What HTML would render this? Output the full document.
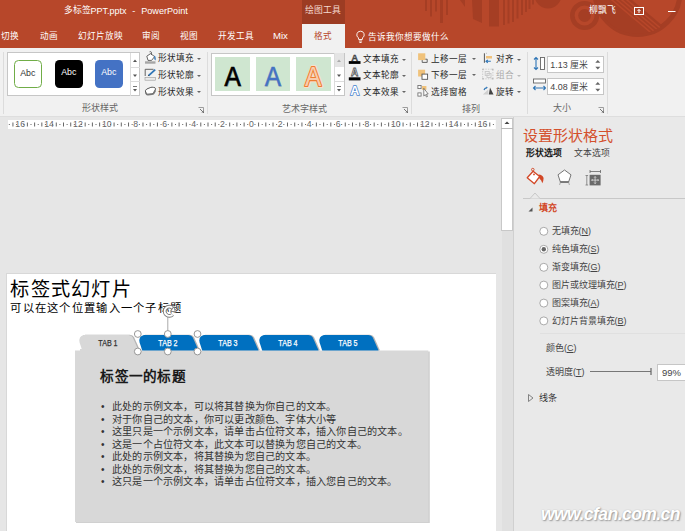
<!DOCTYPE html>
<html lang="zh-CN"><head><meta charset="utf-8">
<style>
*{margin:0;padding:0;box-sizing:border-box}
html,body{width:685px;height:531px;overflow:hidden;background:#e6e6e6;font-family:"Liberation Sans",sans-serif;color:#444}
.a{position:absolute;white-space:nowrap}
.t{position:absolute;white-space:nowrap;line-height:1}
#tb{position:absolute;left:0;top:0;width:685px;height:48px;background:#b7472a;overflow:hidden}
.tab{position:absolute;top:31px;font-size:8.6px;color:#fff;line-height:10px}
#rib{position:absolute;left:0;top:48px;width:685px;height:69px;background:#f1f1f1;border-bottom:1px solid #dedede}
.sep{position:absolute;top:6px;width:1px;height:60px;background:#dcdcdc}
.glab{position:absolute;top:56px;font-size:9px;color:#666;line-height:10px}
.cmd{position:absolute;font-size:8.6px;color:#262626;line-height:10px;font-weight:500}
.dd{display:inline-block;width:0;height:0;border-left:2px solid transparent;border-right:2px solid transparent;border-top:2px solid #666;vertical-align:middle;margin-left:3px}
.launch{position:absolute;width:6px;height:6px}
#main{position:absolute;left:0;top:117px;width:513px;height:414px;background:#e6e6e6}
#pane{position:absolute;left:513px;top:117px;width:172px;height:414px;background:#e9e9e9;border-left:1px solid #d0d0d0}
#slide{position:absolute;left:6px;top:273px;width:490px;height:258px;background:#fff;border-left:1px solid #d8d8d8;border-top:1px solid #d8d8d8}
.ro{position:absolute;font-size:9px;color:#444;line-height:10px}
.rd{position:absolute;width:9px;height:9px;border:1px solid #8a8a8a;border-radius:50%;background:#fff}
.bl{position:absolute;left:101px;font-size:10.1px;color:#333;line-height:12px;white-space:nowrap;letter-spacing:0.2px}
.bl b{position:absolute;left:0;font-weight:normal}
.bl span{position:absolute;left:11px}
.abc{width:27.5px;height:27.5px;border-radius:4.5px;font-size:8.8px;line-height:25px;text-align:center;font-weight:500}
.wa{width:35px;height:34px;background:#cfe6d0;text-align:center;font-size:29px;line-height:34px}
.inp{width:57px;height:16.5px;background:#fff;border:1px solid #c6c6c6;font-size:8.9px;color:#444;line-height:16.5px;padding-left:2.3px}
.sep{top:52px;height:62px}
</style></head><body>

<div id="tb">
  <svg class="a" style="left:0;top:0" width="685" height="47">
  <g fill="#a53e24">
    <rect x="425" y="0" width="2" height="11"/><rect x="430" y="0" width="2" height="16.5"/><rect x="435" y="0" width="2" height="11.5"/>
    <rect x="440" y="0" width="3" height="23"/><rect x="446" y="0" width="2" height="15"/>
    <path d="M460 0 L465 0 L465 7 Z"/>
    <path d="M472 0 L482 0 L482 23 L473 19 Z"/>
    <rect x="489" y="0" width="10" height="26.5"/>
    <rect x="503" y="0" width="2" height="25"/><rect x="507.5" y="0" width="2" height="23.5"/><rect x="512" y="0" width="2" height="22"/>
    <rect x="516.5" y="0" width="2" height="18.5"/><rect x="521" y="0" width="2" height="15"/><rect x="525" y="0" width="2" height="12"/>
    <rect x="528.5" y="0" width="2" height="9"/><rect x="532" y="0" width="2" height="4.5"/>
    <circle cx="548" cy="-5" r="13.5"/>
    <circle cx="584.6" cy="15.5" r="6.4"/>
  </g>
  <circle cx="584.6" cy="15.5" r="12.3" fill="none" stroke="#a53e24" stroke-width="4.6"/>
  <circle cx="637.5" cy="-8" r="42.5" fill="none" stroke="#a53e24" stroke-width="5"/>
  <clipPath id="bc"><circle cx="637.5" cy="-8" r="42"/></clipPath>
  <g clip-path="url(#bc)">
    <path d="M580 -10 L620.1 -10 L680 40.3 L580 40.3 Z" fill="#a53e24"/>
    <g stroke="#b7472a" stroke-width="1.5">
      <path d="M600.1 -10 L660 40.3"/><path d="M605.1 -10 L665 40.3"/><path d="M610.1 -10 L670 40.3"/><path d="M615.1 -10 L675 40.3"/>
    </g>
  </g>
  <g stroke="#fff" fill="none" stroke-width="1">
    <rect x="634.5" y="7.5" width="9" height="7"/>
    <path d="M639 13 V9.5 M637.5 11 L639 9.5 L640.5 11"/>
    <path d="M668 11.5 H675.5"/>
  </g>
  </svg>
  <div class="t" style="left:588.5px;top:5.5px;font-size:8.8px;color:#fff">柳飘飞</div>
  <div class="t" style="left:64px;top:6px;font-size:8.8px;color:#fff">多标签</div>
  <svg class="a" style="left:0;top:0" width="200" height="24"><g fill="#fff" font-family="Liberation Sans" font-size="9.2">
    <text x="90.5" y="14.3" textLength="36" lengthAdjust="spacingAndGlyphs">PPT.pptx</text>
    <text x="132.3" y="14.3">-</text>
    <text x="141.2" y="14.3" textLength="46.6" lengthAdjust="spacingAndGlyphs">PowerPoint</text>
  </g></svg>
  <div class="a" style="left:302px;top:0;width:43px;height:24px;background:#9c3c23"></div>
  <div class="t" style="left:305px;top:5.5px;font-size:8.8px;color:#f4d9d0">绘图工具</div>
  <div class="tab" style="left:1px">切换</div>
  <div class="tab" style="left:40px">动画</div>
  <div class="tab" style="left:77.5px">幻灯片放映</div>
  <div class="tab" style="left:141.5px">审阅</div>
  <div class="tab" style="left:180px">视图</div>
  <div class="tab" style="left:217.5px">开发工具</div>
  <div class="tab" style="left:273px;font-size:9.6px;top:30.5px">Mix</div>
  <div class="a" style="left:302px;top:24px;width:43px;height:24px;background:#f1f1f1"></div>
  <div class="tab" style="left:314px;color:#b7472a">格式</div>
  <svg class="a" style="left:354.5px;top:29.5px" width="11" height="14"><path d="M5.5 1.2 A3.6 3.6 0 0 1 7.6 7.8 L7.3 9.5 H3.7 L3.4 7.8 A3.6 3.6 0 0 1 5.5 1.2 Z" fill="none" stroke="#fff" stroke-width="0.9"/><path d="M3.9 11 H7.1 M4.4 12.5 H6.6" stroke="#fff" stroke-width="0.9"/></svg>
  <div class="tab" style="left:367.5px;top:31.8px;font-size:8.6px">告诉我你想要做什么</div>
</div>

<div id="rib"></div>
<div id="ribc">
  <div class="sep" style="left:3px"></div>
  <div class="sep" style="left:207px"></div>
  <div class="sep" style="left:411px"></div>
  <div class="sep" style="left:527px"></div>
  <div class="sep" style="left:607px"></div>
  <!-- group 1 gallery -->
  <div class="a" style="left:7px;top:52px;width:133px;height:43.5px;background:#fff;border:1px solid #c6c6c6"></div>
  <div class="a abc" style="left:14px;top:60px;border:1px solid #70ad47;background:#fff;color:#333">Abc</div>
  <div class="a abc" style="left:55px;top:60px;background:#000;color:#fff">Abc</div>
  <div class="a abc" style="left:95px;top:60px;background:#4472c4;color:#fff">Abc</div>
  <div class="a" style="left:130px;top:52.5px;width:10px;height:43px;border-left:1px solid #dcdcdc"></div>
  <div class="a" style="left:130px;top:67px;width:10px;height:1px;background:#dcdcdc"></div>
  <div class="a" style="left:130px;top:81px;width:10px;height:1px;background:#dcdcdc"></div>
  <svg class="a" style="left:130px;top:52px" width="10" height="44">
    <path d="M3 10 L5 7.5 L7 10 Z" fill="#555"/>
    <path d="M3 22.5 L7 22.5 L5 25 Z" fill="#555"/>
    <path d="M3 34.5 H7" stroke="#555" stroke-width="0.8"/><path d="M3 37 L7 37 L5 39.5 Z" fill="#555"/>
  </svg>
  <!-- group 1 commands -->
  <svg class="a" style="left:144px;top:51px" width="14" height="48">
    <rect x="1" y="10.3" width="10.5" height="2.4" fill="#a6a6a6"/>
    <path d="M2.8 5.2 L6.6 2.6 L10.6 5.6 L7.6 9.4 L4 9.4 Z" fill="#fff" stroke="#555" stroke-width="0.9" stroke-linejoin="round"/>
    <path d="M5.6 0.8 Q6.6 0.2 7.4 1.2 L7.4 4" fill="none" stroke="#555" stroke-width="0.9"/>
    <path d="M10.2 4.6 Q12.2 5.6 11.6 9.4 L10.3 8.2 Z" fill="#2e75b6"/>
    <path d="M1.2 25 V18.3 H9.5" fill="none" stroke="#555" stroke-width="0.9"/>
    <path d="M11.2 18.6 L4.6 24.6" stroke="#2e75b6" stroke-width="1.8"/>
    <path d="M3.8 25.2 L4.2 23.8 L5.2 24.6 Z" fill="#333"/>
    <rect x="1" y="26.6" width="10.5" height="2.6" fill="#eaeaea" stroke="#9a9a9a" stroke-width="0.6"/>
    <path d="M1.5 41 Q1 39 2.8 38 L6.8 36.4 Q8 36 9.6 36.4 L11 36.8 Q12 37.4 11.2 39 L9.6 41.6 Q9 42.6 7.8 42.8 L3.6 43.4 Q2 43.4 1.5 41 Z" fill="#fff" stroke="#444" stroke-width="0.9"/>
    <path d="M1.8 41.5 Q2.4 43.8 4 43.6 L8 43.2 Q9.6 43 10.2 41.6 L11.4 39.4" fill="none" stroke="#777" stroke-width="1.6"/>
  </svg>
  <div class="cmd" style="left:158px;top:53px">形状填充<i class="dd"></i></div>
  <div class="cmd" style="left:158px;top:70px">形状轮廓<i class="dd"></i></div>
  <div class="cmd" style="left:158px;top:86.5px">形状效果<i class="dd"></i></div>
  <div class="glab" style="left:82px;top:103px">形状样式</div>
  <svg class="a launch" style="left:198px;top:107px" width="7" height="7"><path d="M0.5 0.5 H5.5 V5.5" fill="none" stroke="#888" stroke-width="0.8"/><path d="M2 2 L6 6 M6 3.5 V6 H3.5" stroke="#666" fill="none" stroke-width="0.9"/></svg>
  <!-- group 2 -->
  <div class="a" style="left:211px;top:52.5px;width:134px;height:43px;background:#fff;border:1px solid #c6c6c6"></div>
  <div class="a" style="left:215px;top:57px;width:35px;height:34px;background:#cfe6d0"></div>
  <div class="a" style="left:255.5px;top:57px;width:34.5px;height:34px;background:#cfe6d0"></div>
  <div class="a" style="left:295.5px;top:57px;width:35px;height:34px;background:#cfe6d0"></div>
  <svg class="a" style="left:210px;top:50px" width="130" height="45"><g font-family="Liberation Sans" font-size="28.5" text-anchor="middle">
    <text transform="translate(23.6 0) scale(0.86 1)" x="0" y="37.2" fill="#999" opacity="0.5">A</text>
    <text transform="translate(22.6 0) scale(0.86 1)" x="0" y="36.2" fill="#000" stroke="#000" stroke-width="0.7">A</text>
    <text transform="translate(63.6 0) scale(0.86 1)" x="0" y="37.2" fill="#999" opacity="0.4">A</text>
    <text transform="translate(62.8 0) scale(0.86 1)" x="0" y="36.2" fill="#4472c4" stroke="#4472c4" stroke-width="0.5">A</text>
    <text transform="translate(103.2 0) scale(0.86 1)" x="0" y="36.2" fill="#f8cbad" stroke="#fbe0cc" stroke-width="4.2" stroke-linejoin="round" opacity="0.9">A</text>
    <text transform="translate(103.2 0) scale(0.86 1)" x="0" y="36.2" fill="#f8cbad" stroke="#ed7d31" stroke-width="2.2" stroke-linejoin="round" style="paint-order:stroke">A</text>
  </g></svg>
  <div class="a" style="left:334px;top:53px;width:10px;height:14px;background:#e4e4e4;border-left:1px solid #dcdcdc"></div>
  <div class="a" style="left:334px;top:67px;width:10px;height:28px;border-left:1px solid #dcdcdc"></div>
  <div class="a" style="left:334px;top:81px;width:10px;height:1px;background:#dcdcdc"></div>
  <svg class="a" style="left:334px;top:52px" width="10" height="44">
    <path d="M3 10 L5 7.5 L7 10 Z" fill="#aaa"/>
    <path d="M3 22.5 L7 22.5 L5 25 Z" fill="#555"/>
    <path d="M3 34.5 H7" stroke="#555" stroke-width="0.8"/><path d="M3 37 L7 37 L5 39.5 Z" fill="#555"/>
  </svg>
  <svg class="a" style="left:348px;top:51px" width="14" height="48">
    <g font-family="Liberation Sans" font-weight="bold" text-anchor="middle">
    <text x="6.7" y="9.9" font-size="9.5" fill="#555" stroke="#333" stroke-width="0.3">A</text>
    <text x="6.5" y="25.4" font-size="10" fill="#fff" stroke="#555" stroke-width="0.8">A</text>
    <text x="6.7" y="44" font-size="12.5" fill="#fff" stroke="#4a86d0" stroke-width="1.5" style="paint-order:stroke">A</text>
    </g>
    <rect x="0.8" y="10.1" width="11.7" height="2.8" fill="#000"/>
    <rect x="0.8" y="26.3" width="11.7" height="3.1" fill="#000"/>
  </svg>
  <div class="cmd" style="left:363px;top:54px">文本填充<i class="dd"></i></div>
  <div class="cmd" style="left:363px;top:70px">文本轮廓<i class="dd"></i></div>
  <div class="cmd" style="left:363px;top:86.5px">文本效果<i class="dd"></i></div>
  <div class="glab" style="left:282px;top:103.5px">艺术字样式</div>
  <svg class="a launch" style="left:402px;top:107px" width="7" height="7"><path d="M0.5 0.5 H5.5 V5.5" fill="none" stroke="#888" stroke-width="0.8"/><path d="M2 2 L6 6 M6 3.5 V6 H3.5" stroke="#666" fill="none" stroke-width="0.9"/></svg>
  <!-- group 3 -->
  <svg class="a" style="left:417px;top:51px" width="14" height="48">
    <rect x="1.1" y="2.3" width="7.2" height="6.8" fill="#f0c27b"/><path d="M8.3 8.2 H10.2 V11.4 H5.2 V9.1" fill="none" stroke="#555" stroke-width="0.9"/>
    <rect x="1.1" y="18.7" width="7" height="6.8" fill="#f0c27b"/><rect x="5" y="23.1" width="5.6" height="5.2" fill="#fff" stroke="#555" stroke-width="0.9"/>
    <rect x="0.9" y="34.4" width="3.2" height="3.2" fill="#fff" stroke="#666" stroke-width="0.8"/><rect x="0.9" y="41.9" width="3.2" height="3.2" fill="#fff" stroke="#666" stroke-width="0.8"/>
    <rect x="5" y="35" width="4.4" height="3.8" fill="#f0c27b"/><path d="M6.8 37.3 L6.8 45 L8.3 43.6 L9.5 46 L10.5 45.5 L9.4 43.2 L11.2 43 Z" fill="#fff" stroke="#555" stroke-width="0.7"/>
  </svg>
  <div class="cmd" style="left:431px;top:54px">上移一层</div><i class="a dd" style="left:469px;top:58px"></i>
  <div class="cmd" style="left:431px;top:70px">下移一层</div><i class="a dd" style="left:469px;top:74px"></i>
  <div class="cmd" style="left:431px;top:86.5px">选择窗格</div>
  <svg class="a" style="left:482px;top:51px" width="13" height="48">
    <path d="M2.4 2.3 V11.8" stroke="#555" stroke-width="1"/><rect x="4" y="5" width="6" height="2.5" fill="#f0c27b"/>
    <path d="M4 10.3 H8.8 M5.8 8.8 L4 10.3 L5.8 11.8" stroke="#2e75b6" fill="none" stroke-width="1.1"/>
    <path d="M4 2.3 H6" stroke="#999" stroke-width="0.6" stroke-dasharray="1 1"/>
    <g fill="none" stroke="#c8c8c8" stroke-width="0.9"><rect x="0.7" y="18.2" width="10.2" height="9.6" stroke-dasharray="1.4 1.2"/><rect x="3.2" y="20.5" width="4" height="4"/><rect x="5" y="22.5" width="4" height="4"/></g>
    <g fill="#bbb"><rect x="0.2" y="17.7" width="1.5" height="1.5"/><rect x="10" y="17.7" width="1.5" height="1.5"/><rect x="0.2" y="27" width="1.5" height="1.5"/><rect x="10" y="27" width="1.5" height="1.5"/></g>
    <path d="M6.8 43.6 L11.5 43.6 L8 36.6 Z" fill="#444"/><path d="M0.8 43.6 L6.3 43.6 L6.3 38.5 Z" fill="#d0d0d0"/>
    <path d="M2 39 Q2.5 37 4.8 36.6" fill="none" stroke="#2e75b6" stroke-width="1.1"/><path d="M4.2 35.6 L5.8 36.6 L4.4 37.8 Z" fill="#2e75b6"/>
  </svg>
  <div class="cmd" style="left:496px;top:54px">对齐<i class="dd"></i></div>
  <div class="cmd" style="left:496px;top:70px;color:#aaa">组合<i class="dd" style="border-top-color:#bbb"></i></div>
  <div class="cmd" style="left:496px;top:86.5px">旋转<i class="dd"></i></div>
  <div class="glab" style="left:461.5px;top:103.5px">排列</div>
  <!-- group 4 -->
  <svg class="a" style="left:532px;top:56px" width="14" height="42">
    <rect x="8.5" y="1.5" width="4" height="12" fill="#fff" stroke="#666" stroke-width="0.9"/>
    <path d="M4 1.5 V13.5 M2 3.5 L4 1.5 L6 3.5 M2 11.5 L4 13.5 L6 11.5" stroke="#2e75b6" fill="none" stroke-width="1.1"/>
    <rect x="1.5" y="23" width="12" height="4" fill="#fff" stroke="#666" stroke-width="0.9"/>
    <path d="M1.5 32 H13.5 M3.5 30 L1.5 32 L3.5 34 M11.5 30 L13.5 32 L11.5 34" stroke="#2e75b6" fill="none" stroke-width="1.1"/>
  </svg>
  <div class="a inp" style="left:547px;top:56px"><span>1.13 厘米</span></div>
  <div class="a inp" style="left:547px;top:78px"><span>4.08 厘米</span></div>
  <svg class="a" style="left:594px;top:56px" width="8" height="40">
    <path d="M1.3 6.8 L3.8 4 L6.3 6.8 Z M1.3 10.8 L6.3 10.8 L3.8 13.4 Z" fill="#666"/>
    <path d="M1.3 28.8 L3.8 26 L6.3 28.8 Z M1.3 32.8 L6.3 32.8 L3.8 35.4 Z" fill="#666"/>
  </svg>
  <div class="glab" style="left:553px;top:103px">大小</div>
  <svg class="a launch" style="left:598px;top:107px" width="7" height="7"><path d="M0.5 0.5 H5.5 V5.5" fill="none" stroke="#888" stroke-width="0.8"/><path d="M2 2 L6 6 M6 3.5 V6 H3.5" stroke="#666" fill="none" stroke-width="0.9"/></svg>
</div>

<div id="main"></div>
<svg class="a" style="left:0;top:0" width="500" height="135"><rect x="8" y="120" width="487.8" height="9" fill="#fff"/><g fill="#666" font-size="8.7" font-family="Liberation Sans"><rect x="8.81" y="124" width="1" height="1"/><rect x="12.43" y="122.5" width="1" height="4"/><rect x="16.04" y="124" width="1" height="1"/><text x="20.15" y="127" text-anchor="middle">16</text><rect x="23.26" y="124" width="1" height="1"/><rect x="26.88" y="122.5" width="1" height="4"/><rect x="30.49" y="124" width="1" height="1"/><rect x="34.10" y="122.5" width="1" height="4"/><rect x="37.71" y="124" width="1" height="1"/><rect x="41.33" y="122.5" width="1" height="4"/><rect x="44.94" y="124" width="1" height="1"/><text x="49.05" y="127" text-anchor="middle">14</text><rect x="52.16" y="124" width="1" height="1"/><rect x="55.78" y="122.5" width="1" height="4"/><rect x="59.39" y="124" width="1" height="1"/><rect x="63.00" y="122.5" width="1" height="4"/><rect x="66.61" y="124" width="1" height="1"/><rect x="70.22" y="122.5" width="1" height="4"/><rect x="73.84" y="124" width="1" height="1"/><text x="77.95" y="127" text-anchor="middle">12</text><rect x="81.06" y="124" width="1" height="1"/><rect x="84.68" y="122.5" width="1" height="4"/><rect x="88.29" y="124" width="1" height="1"/><rect x="91.90" y="122.5" width="1" height="4"/><rect x="95.51" y="124" width="1" height="1"/><rect x="99.12" y="122.5" width="1" height="4"/><rect x="102.74" y="124" width="1" height="1"/><text x="106.85" y="127" text-anchor="middle">10</text><rect x="109.96" y="124" width="1" height="1"/><rect x="113.57" y="122.5" width="1" height="4"/><rect x="117.19" y="124" width="1" height="1"/><rect x="120.80" y="122.5" width="1" height="4"/><rect x="124.41" y="124" width="1" height="1"/><rect x="128.03" y="122.5" width="1" height="4"/><rect x="131.64" y="124" width="1" height="1"/><text x="135.75" y="127" text-anchor="middle">8</text><rect x="138.86" y="124" width="1" height="1"/><rect x="142.47" y="122.5" width="1" height="4"/><rect x="146.09" y="124" width="1" height="1"/><rect x="149.70" y="122.5" width="1" height="4"/><rect x="153.31" y="124" width="1" height="1"/><rect x="156.93" y="122.5" width="1" height="4"/><rect x="160.54" y="124" width="1" height="1"/><text x="164.65" y="127" text-anchor="middle">6</text><rect x="167.76" y="124" width="1" height="1"/><rect x="171.38" y="122.5" width="1" height="4"/><rect x="174.99" y="124" width="1" height="1"/><rect x="178.60" y="122.5" width="1" height="4"/><rect x="182.21" y="124" width="1" height="1"/><rect x="185.82" y="122.5" width="1" height="4"/><rect x="189.44" y="124" width="1" height="1"/><text x="193.55" y="127" text-anchor="middle">4</text><rect x="196.66" y="124" width="1" height="1"/><rect x="200.28" y="122.5" width="1" height="4"/><rect x="203.89" y="124" width="1" height="1"/><rect x="207.50" y="122.5" width="1" height="4"/><rect x="211.11" y="124" width="1" height="1"/><rect x="214.72" y="122.5" width="1" height="4"/><rect x="218.34" y="124" width="1" height="1"/><text x="222.45" y="127" text-anchor="middle">2</text><rect x="225.56" y="124" width="1" height="1"/><rect x="229.18" y="122.5" width="1" height="4"/><rect x="232.79" y="124" width="1" height="1"/><rect x="236.40" y="122.5" width="1" height="4"/><rect x="240.01" y="124" width="1" height="1"/><rect x="243.62" y="122.5" width="1" height="4"/><rect x="247.24" y="124" width="1" height="1"/><text x="251.35" y="127" text-anchor="middle">0</text><rect x="254.46" y="124" width="1" height="1"/><rect x="258.07" y="122.5" width="1" height="4"/><rect x="261.69" y="124" width="1" height="1"/><rect x="265.30" y="122.5" width="1" height="4"/><rect x="268.91" y="124" width="1" height="1"/><rect x="272.52" y="122.5" width="1" height="4"/><rect x="276.14" y="124" width="1" height="1"/><text x="280.25" y="127" text-anchor="middle">2</text><rect x="283.36" y="124" width="1" height="1"/><rect x="286.98" y="122.5" width="1" height="4"/><rect x="290.59" y="124" width="1" height="1"/><rect x="294.20" y="122.5" width="1" height="4"/><rect x="297.81" y="124" width="1" height="1"/><rect x="301.43" y="122.5" width="1" height="4"/><rect x="305.04" y="124" width="1" height="1"/><text x="309.15" y="127" text-anchor="middle">4</text><rect x="312.26" y="124" width="1" height="1"/><rect x="315.88" y="122.5" width="1" height="4"/><rect x="319.49" y="124" width="1" height="1"/><rect x="323.10" y="122.5" width="1" height="4"/><rect x="326.71" y="124" width="1" height="1"/><rect x="330.32" y="122.5" width="1" height="4"/><rect x="333.94" y="124" width="1" height="1"/><text x="338.05" y="127" text-anchor="middle">6</text><rect x="341.16" y="124" width="1" height="1"/><rect x="344.77" y="122.5" width="1" height="4"/><rect x="348.39" y="124" width="1" height="1"/><rect x="352.00" y="122.5" width="1" height="4"/><rect x="355.61" y="124" width="1" height="1"/><rect x="359.23" y="122.5" width="1" height="4"/><rect x="362.84" y="124" width="1" height="1"/><text x="366.95" y="127" text-anchor="middle">8</text><rect x="370.06" y="124" width="1" height="1"/><rect x="373.67" y="122.5" width="1" height="4"/><rect x="377.29" y="124" width="1" height="1"/><rect x="380.90" y="122.5" width="1" height="4"/><rect x="384.51" y="124" width="1" height="1"/><rect x="388.12" y="122.5" width="1" height="4"/><rect x="391.74" y="124" width="1" height="1"/><text x="395.85" y="127" text-anchor="middle">10</text><rect x="398.96" y="124" width="1" height="1"/><rect x="402.57" y="122.5" width="1" height="4"/><rect x="406.19" y="124" width="1" height="1"/><rect x="409.80" y="122.5" width="1" height="4"/><rect x="413.41" y="124" width="1" height="1"/><rect x="417.02" y="122.5" width="1" height="4"/><rect x="420.64" y="124" width="1" height="1"/><text x="424.75" y="127" text-anchor="middle">12</text><rect x="427.86" y="124" width="1" height="1"/><rect x="431.48" y="122.5" width="1" height="4"/><rect x="435.09" y="124" width="1" height="1"/><rect x="438.70" y="122.5" width="1" height="4"/><rect x="442.31" y="124" width="1" height="1"/><rect x="445.92" y="122.5" width="1" height="4"/><rect x="449.54" y="124" width="1" height="1"/><text x="453.65" y="127" text-anchor="middle">14</text><rect x="456.76" y="124" width="1" height="1"/><rect x="460.38" y="122.5" width="1" height="4"/><rect x="463.99" y="124" width="1" height="1"/><rect x="467.60" y="122.5" width="1" height="4"/><rect x="471.21" y="124" width="1" height="1"/><rect x="474.82" y="122.5" width="1" height="4"/><rect x="478.44" y="124" width="1" height="1"/><text x="482.55" y="127" text-anchor="middle">16</text><rect x="485.66" y="124" width="1" height="1"/><rect x="489.27" y="122.5" width="1" height="4"/><rect x="492.89" y="124" width="1" height="1"/></g></svg>
<div class="a" style="left:512.5px;top:117px;width:1.5px;height:414px;background:#d2d2d2"></div>
<div class="a" style="left:501.5px;top:118px;width:11px;height:413px;background:#e0e0e0"></div>
<div class="a" style="left:501px;top:118px;width:11.5px;height:113px;background:#fff;border:1px solid #c8c8c8"></div>
<div class="a" style="left:501px;top:128px;width:11.5px;height:1px;background:#b8b8b8"></div>
<svg class="a" style="left:501px;top:118px" width="12" height="10"><path d="M3.5 6 L6 3.5 L8.5 6 Z" fill="#444"/></svg>
<div id="pane"></div>
<div class="t" style="left:522.5px;top:128.3px;font-size:15px;color:#d4502c">设置形状格式</div>
<div class="t" style="left:526px;top:149px;font-size:8.8px;color:#1a1a1a;font-weight:bold;letter-spacing:-0.1px">形状选项</div>
<div class="t" style="left:573.5px;top:149px;font-size:8.8px;color:#444">文本选项</div>
<svg class="a" style="left:514px;top:160px" width="171" height="60">
  <g transform="translate(12,8)">
    <path d="M1.2 9.8 L7.1 3.2 L13.7 8.5 L8.4 15.7 Z" fill="#fff" stroke="#d24726" stroke-width="1.3" stroke-linejoin="round"/>
    <circle cx="6.8" cy="1.6" r="1.3" fill="none" stroke="#d24726" stroke-width="0.9"/>
    <circle cx="8" cy="6.4" r="0.9" fill="#d24726"/>
    <path d="M12.6 6.6 Q16.5 6.8 17.6 10 Q17.6 12.8 16.3 15.2 Q15.6 12.2 13.4 10.6 Z" fill="#d24726"/>
  </g>
  <g transform="translate(43,9)">
    <path d="M7.5 1 L14 5.8 L11.6 13 L3.4 13 L1 5.8 Z" fill="#fff" stroke="#666" stroke-width="0.9" stroke-linejoin="round"/>
    <path d="M3.4 13 L2.6 16 M11.6 13 L12.4 16" stroke="#999" stroke-width="0.8"/><path d="M3.4 13 H11.6" stroke="#555" stroke-width="1.2"/>
  </g>
  <g transform="translate(71,8)">
    <path d="M5 3.5 H15.5 M5 2 V5 M15.5 2 V5" stroke="#666" stroke-width="0.8"/>
    <path d="M1.8 7.5 V17 M0.5 7.5 H3.1 M0.5 17 H3.1" stroke="#777" stroke-width="0.8"/>
    <rect x="4.6" y="6.8" width="11" height="10.6" fill="#6a6a6a"/>
    <path d="M10.1 8.6 V15.6 M6.6 12.1 H13.6" stroke="#fff" stroke-width="0.6"/>
    <path d="M9.1 9.6 L10.1 8.6 L11.1 9.6 M9.1 14.6 L10.1 15.6 L11.1 14.6 M7.6 11.1 L6.6 12.1 L7.6 13.1 M12.6 11.1 L13.6 12.1 L12.6 13.1" fill="none" stroke="#fff" stroke-width="0.6"/>
  </g>
  <path d="M9 38.5 H171" stroke="#c8c8c8" stroke-width="1"/>
  <path d="M16 38.5 L21 33 L26 38.5" fill="#e9e9e9" stroke="#c8c8c8" stroke-width="1"/>
  <path d="M14.5 51.5 L18.5 47.5 L18.5 51.5 Z" fill="#555"/>
</svg>
<div class="t" style="left:538.5px;top:203.5px;font-size:9px;color:#d24726;font-weight:bold">填充</div>
<svg class="a" style="left:514px;top:220px" width="171" height="110">
  <g fill="#fff" stroke="#a0a0a0" stroke-width="0.9">
    <circle cx="29.8" cy="11.3" r="4"/><circle cx="29.8" cy="29.3" r="4"/><circle cx="29.8" cy="47.3" r="4"/>
    <circle cx="29.8" cy="65.1" r="4"/><circle cx="29.8" cy="83.1" r="4"/><circle cx="29.8" cy="100.9" r="4"/>
  </g>
  <circle cx="29.8" cy="29.3" r="2.2" fill="#666"/>
</svg>
<div class="ro" style="left:551.5px;top:226px">无填充(<u>N</u>)</div>
<div class="ro" style="left:551.5px;top:244px">纯色填充(<u>S</u>)</div>
<div class="ro" style="left:551.5px;top:262px">渐变填充(<u>G</u>)</div>
<div class="ro" style="left:551.5px;top:280px">图片或纹理填充(<u>P</u>)</div>
<div class="ro" style="left:551.5px;top:298px">图案填充(<u>A</u>)</div>
<div class="ro" style="left:551.5px;top:316px">幻灯片背景填充(<u>B</u>)</div>
<div class="a" style="left:540px;top:333px;width:145px;height:1px;background:#e0e0e0"></div>
<div class="ro" style="left:546px;top:343px">颜色(<u>C</u>)</div>
<div class="ro" style="left:546px;top:366.5px">透明度(<u>T</u>)</div>
<svg class="a" style="left:585px;top:365px" width="70" height="14"><path d="M5 6.5 H66" stroke="#777" stroke-width="1.2"/><path d="M66 3 V10" stroke="#666" stroke-width="1.2"/></svg>
<div class="a" style="left:656.5px;top:363.5px;width:40px;height:17.5px;background:#fff;border:1px solid #c6c6c6;font-size:9.5px;color:#444;line-height:15.5px;padding-left:4.5px">99%</div>
<svg class="a" style="left:527px;top:393px" width="8" height="10"><path d="M1.5 1.5 L6 5 L1.5 8.5 Z" fill="none" stroke="#777" stroke-width="0.9"/></svg>
<div class="t" style="left:539px;top:393.5px;font-size:9px;color:#333;font-weight:500">线条</div>
<div class="a" style="left:541px;top:504px;font-size:17.5px;font-weight:bold;font-style:italic;color:#fff;text-shadow:0 0 1px #aaa,1px 1px 1.5px #999;letter-spacing:-0.55px">www.cfan.com.cn</div>


<div id="slide"></div>
<div class="t" style="left:10.3px;top:279.8px;font-size:19.2px;color:#000;font-weight:500;letter-spacing:1.3px">标签式幻灯片</div>
<div class="t" style="left:10.3px;top:303px;font-size:11.3px;color:#000;font-weight:500;letter-spacing:1.28px">可以在这个位置输入一个子标题</div>
<svg class="a" style="left:0;top:0" width="500" height="531">
  <rect x="76" y="351.5" width="353.8" height="171.5" fill="#c4c4c4" opacity="0.8"/><rect x="75" y="350.5" width="353.3" height="171.5" fill="#d8d8d8"/>
  <defs>
    <path id="tp" d="M3.2 15.5 L0.6 7.5 Q-0.8 1.2 5 0 L49.5 0 Q52.6 0 53.8 2.6 L59.6 15.5 Z"/>
  </defs>
  <g fill="#7a7a7a" opacity="0.55">
    <use href="#tp" x="80.3" y="334.7"/>
    <use href="#tp" x="140.3" y="334.7"/><use href="#tp" x="200.3" y="334.7"/><use href="#tp" x="260.3" y="334.7"/><use href="#tp" x="320.3" y="334.7"/>
  </g>
  <use href="#tp" x="79" y="335" fill="#d8d8d8"/><rect x="80" y="349" width="57" height="2" fill="#d8d8d8"/>
  <use href="#tp" x="139" y="335" fill="#0070c0"/>
  <use href="#tp" x="199" y="335" fill="#0070c0"/>
  <use href="#tp" x="259" y="335" fill="#0070c0"/>
  <use href="#tp" x="319" y="335" fill="#0070c0"/>
  <g font-family="Liberation Sans" font-size="8.6" stroke-width="0.25">
    <text x="98.3" y="346.3" fill="#333" stroke="#333" textLength="19.3" lengthAdjust="spacingAndGlyphs">TAB 1</text>
    <text x="158.3" y="346.3" fill="#fff" stroke="#fff" textLength="19.3" lengthAdjust="spacingAndGlyphs">TAB 2</text>
    <text x="218.3" y="346.3" fill="#fff" stroke="#fff" textLength="19.3" lengthAdjust="spacingAndGlyphs">TAB 3</text>
    <text x="278.3" y="346.3" fill="#fff" stroke="#fff" textLength="19.3" lengthAdjust="spacingAndGlyphs">TAB 4</text>
    <text x="338.3" y="346.3" fill="#fff" stroke="#fff" textLength="19.3" lengthAdjust="spacingAndGlyphs">TAB 5</text>
  </g>
  <path d="M167.8 316.5 V334" stroke="#aaa" stroke-width="1"/>
  <g fill="#fff" stroke="#8c8c8c" stroke-width="0.9">
    <circle cx="137.8" cy="334" r="3.4"/><circle cx="167.8" cy="334" r="3.4"/><circle cx="197.5" cy="334" r="3.4"/>
    <circle cx="137.8" cy="351.5" r="3.4"/><circle cx="167.8" cy="351.5" r="3.4"/><circle cx="197.5" cy="351.5" r="3.4"/>
  </g>
  <path d="M172.4 307.8 A4.6 4.6 0 1 0 172.6 314.5" fill="none" stroke="#7a7a7a" stroke-width="3.8"/>
  <path d="M172.4 307.8 A4.6 4.6 0 1 0 172.6 314.5" fill="none" stroke="#fff" stroke-width="2"/>
  <path d="M170.5 311.2 L175.2 311.8 L174.2 306.6 Z" fill="#fff" stroke="#7a7a7a" stroke-width="0.9" stroke-linejoin="round"/>
</svg>
<div class="t" style="left:100.3px;top:370px;font-size:13.6px;color:#1a1a1a;font-weight:bold;letter-spacing:0.3px">标签一的标题</div>
<div class="bl" style="top:401.3px"><b>•</b><span>此处的示例文本，可以将其替换为你自己的文本。</span></div>
<div class="bl" style="top:413.8px"><b>•</b><span>对于你自己的文本，你可以更改颜色、字体大小等</span></div>
<div class="bl" style="top:426.1px"><b>•</b><span>这里只是一个示例文本，请单击占位符文本，插入你自己的文本。</span></div>
<div class="bl" style="top:438.6px"><b>•</b><span>这是一个占位符文本，此文本可以替换为您自己的文本。</span></div>
<div class="bl" style="top:451.1px"><b>•</b><span>此处的示例文本，将其替换为您自己的文本。</span></div>
<div class="bl" style="top:463.6px"><b>•</b><span>此处的示例文本，将其替换为您自己的文本。</span></div>
<div class="bl" style="top:475.8px"><b>•</b><span>这只是一个示例文本，请单击占位符文本，插入您自己的文本。</span></div>


</body></html>
